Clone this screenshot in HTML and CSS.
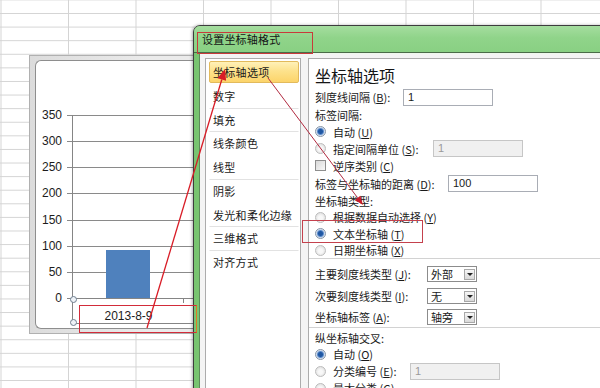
FILE: index.html
```html
<!DOCTYPE html>
<html lang="zh-CN">
<head>
<meta charset="utf-8">
<title>设置坐标轴格式</title>
<link rel="stylesheet" href="styles.css">
</head>
<body>
<div class="sheet">
  <div class="chart">
    <div class="chart-inner">
      <div class="plot-row">
        <div class="ylabels">
          <span>350</span><span>300</span><span>250</span><span>200</span><span>150</span><span>100</span><span>50</span><span>0</span>
        </div>
        <div class="plot">
          <div class="plot-area">
            <div class="bar" style="height:48px"></div>
          </div>
        </div>
      </div>
      <div class="xaxis">
        <span class="xlabel">2013-8-9</span>
        <i class="xtick"></i>
      </div>
    </div>
  </div>

  <div class="dialog">
    <div class="titlebar">设置坐标轴格式</div>
    <div class="dialog-body">
      <ul class="nav">
        <li class="item active">坐标轴选项</li>
        <li class="item sep">数字</li>
        <li class="item sep">填充</li>
        <li class="item">线条颜色</li>
        <li class="item sep">线型</li>
        <li class="item">阴影</li>
        <li class="item sep">发光和柔化边缘</li>
        <li class="item sep">三维格式</li>
        <li class="item">对齐方式</li>
      </ul>
      <div class="panel">
        <div class="section">
          <div class="heading">坐标轴选项</div>
          <div class="row r20"><span class="lbl w88">刻度线间隔 (<u>B</u>):</span><span class="field">1</span></div>
          <div class="row r16">标签间隔:</div>
          <div class="row"><span class="radio on"></span>自动 (<u>U</u>)</div>
          <div class="row"><span class="radio"></span><span class="lbl w100">指定间隔单位 (<u>S</u>):</span><span class="field off">1</span></div>
          <div class="row"><span class="check"></span>逆序类别 (<u>C</u>)</div>
          <div class="row r19"><span class="lbl w133">标签与坐标轴的距离 (<u>D</u>):</span><span class="field">100</span></div>
          <div class="row r16">坐标轴类型:</div>
          <div class="row r16"><span class="radio"></span>根据数据自动选择 (<u>Y</u>)</div>
          <div class="row"><span class="radio on"></span>文本坐标轴 (<u>T</u>)</div>
          <div class="row r16"><span class="radio"></span>日期坐标轴 (<u>X</u>)</div>
        </div>
        <div class="section s2">
          <div class="row r22"><span class="lbl w112">主要刻度线类型 (<u>J</u>):</span><span class="select"><span class="val">外部</span><span class="btn"></span></span></div>
          <div class="row r22"><span class="lbl w112">次要刻度线类型 (<u>I</u>):</span><span class="select"><span class="val">无</span><span class="btn"></span></span></div>
          <div class="row r20"><span class="lbl w112">坐标轴标签 (<u>A</u>):</span><span class="select"><span class="val">轴旁</span><span class="btn"></span></span></div>
        </div>
        <div class="section s3">
          <div class="row r16">纵坐标轴交叉:</div>
          <div class="row r16"><span class="radio on"></span>自动 (<u>O</u>)</div>
          <div class="row r18"><span class="radio"></span><span class="lbl w77">分类编号 (<u>E</u>):</span><span class="field off">1</span></div>
          <div class="row r16"><span class="radio"></span>最大分类 (<u>G</u>)</div>
        </div>
      </div>
    </div>
  </div>

  <div class="mark mark-title"></div>
  <div class="mark mark-text"></div>
  <div class="mark mark-date"></div>

  <svg class="arrows" width="600" height="388" viewBox="0 0 600 388">
    <line x1="147" y1="328" x2="221.8" y2="79.5" stroke="#d81c26" stroke-width="1.3"/>
    <polygon points="225,69 226.1,80.8 217.5,78.2" fill="#d81c26"/>
    <line x1="268" y1="78" x2="357.6" y2="197.8" stroke="#b22a40" stroke-width="1"/>
    <polygon points="363,205 360.4,195.7 354.8,199.9" fill="#c81c2c"/>
  </svg>
</div>
</body>
</html>
```

FILE: styles.css
```css
* { box-sizing: border-box; }

html, body {
  margin: 0;
  padding: 0;
}

body {
  width: 600px;
  height: 388px;
  overflow: hidden;
  background: #fff;
  font-family: "Noto Sans CJK SC", "Liberation Sans", sans-serif;
  color: #1a1a1a;
}

.sheet {
  position: relative;
  width: 600px;
  height: 388px;
  overflow: hidden;
  background-color: #fff;
  background-image:
    linear-gradient(to right, #d4d4d4 1px, transparent 1px),
    linear-gradient(to bottom, #d4d4d4 1px, transparent 1px);
  background-size: 67.5px 13.6px;
  background-position: 0.5px 13px;
}

/* ---------- chart ---------- */
.chart {
  position: absolute;
  left: 29px;
  top: 55px;
  width: 200px;
  height: 279px;
  border: 1px solid #b0b0b0;
  background: linear-gradient(to right, #dcdcdc, #ebebeb 60%);
  padding: 4px 0 4px 5px;
}

.chart-inner {
  height: 100%;
  background: #fff;
  border: 1px solid #8e8e8e;
  border-right: none;
  border-radius: 6px 0 0 6px;
  padding-top: 54px;
}

.plot-row {
  display: flex;
  align-items: flex-start;
}

.ylabels {
  width: 26px;
  height: 197px;
  margin: -7px 5px -7px 0;
  display: flex;
  flex-direction: column;
  justify-content: space-between;
  align-items: flex-end;
  font-family: "Liberation Sans", sans-serif;
  font-size: 12px;
  line-height: 14px;
  color: #1c1c1c;
}

.plot {
  width: 140px;
  height: 184px;
  border-bottom: 1px solid #858585;
  background-image: repeating-linear-gradient(to bottom, #8a8a8a 0 1px, transparent 1px 26.14px);
}

.plot-area {
  margin-left: 5px;
  height: 100%;
  border-left: 1px solid #858585;
  display: flex;
  align-items: flex-end;
}

.bar {
  margin-left: 33px;
  width: 44px;
  background: #4f81bd;
}

.xaxis {
  position: relative;
  margin-left: 36px;
  width: 150px;
  height: 25px;
  border-left: 1px solid #858585;
  border-bottom: 1px solid #858585;
}

.xaxis::before,
.xaxis::after {
  content: "";
  position: absolute;
  left: -3px;
  width: 5px;
  height: 5px;
  border-radius: 50%;
  border: 1px solid #6f7f90;
  background: #eef2f7;
}
.xaxis::before { top: -3px; }
.xaxis::after { bottom: -3px; }

.xlabel {
  display: block;
  width: 111px;
  padding-top: 10px;
  text-align: center;
  font-family: "Liberation Sans", sans-serif;
  font-size: 12px;
  line-height: 14px;
  color: #1c1c1c;
}

.xtick {
  position: absolute;
  left: 110px;
  top: 0;
  width: 1px;
  height: 4px;
  background: #858585;
}

/* ---------- dialog ---------- */
.dialog {
  position: absolute;
  left: 193px;
  top: 25px;
  width: 420px;
  height: 380px;
  border: 1px solid #3d3d3d;
  border-radius: 7px 0 0 0;
  background: linear-gradient(to right, #78c470, #8fd488 60%, #84cd7d);
  overflow: hidden;
  box-shadow: -1px 0 3px rgba(0, 0, 0, 0.3);
}

.titlebar {
  height: 27px;
  padding-left: 8px;
  font-size: 11px;
  letter-spacing: 0.2px;
  line-height: 26px;
  color: #141414;
  background: linear-gradient(to bottom, #a5dd9f, #90d48a 45%, #89d083);
  border-bottom: 1px solid #4b6b49;
}

.dialog-body {
  display: flex;
  align-items: flex-start;
  height: 100%;
  margin-left: 5px;
  border-top: 1px solid #eef8ec;
  border-left: 1px solid #5e8a5b;
  background: #f4f4f4;
  padding: 4px 0 0 5px;
}

.nav {
  list-style: none;
  margin: 0;
  width: 96px;
  height: 340px;
  padding: 2px 1px 0 3px;
  background: #fff;
  border: 1px solid #acacac;
}

.item {
  height: 23.75px;
  padding-left: 3px;
  border: 1px solid transparent;
  font-size: 11px;
  letter-spacing: 0.3px;
  line-height: 21px;
  color: #1a1a1a;
}

.item.sep {
  border-bottom-color: #e2e2e2;
}

.item.active {
  height: 22px;
  margin-bottom: 1.75px;
  border-color: #e2ba5c;
  border-radius: 2px;
  background: linear-gradient(to bottom, #fff1b8, #fde28c 45%, #fcd46a);
}

.panel {
  flex: 1;
  height: 340px;
  margin-left: 7px;
  background: #fff;
  border: 1px solid #acacac;
  padding: 4px 0 0 6px;
  font-size: 11px;
  color: #1a1a1a;
}

.heading {
  height: 24px;
  font-size: 16px;
  line-height: 24px;
  color: #161616;
}

.section + .section {
  margin-left: -6px;
  padding-left: 6px;
  border-top: 1px solid #d2d2d2;
}
.s2 { padding-top: 4px; }
.s3 { padding-top: 2px; }

.row {
  display: flex;
  align-items: center;
  height: 17px;
  line-height: 14px;
  white-space: nowrap;
}
.r16 { height: 16px; }
.r18 { height: 18px; }
.r19 { height: 19px; }
.r20 { height: 20px; }
.r22 { height: 22px; }

u { text-decoration: underline; text-underline-offset: 1px; }

.lbl { display: inline-block; flex: none; }
.w77 { width: 77px; }
.w88 { width: 88px; }
.w100 { width: 100px; }
.w112 { width: 112px; }
.w133 { width: 133px; }

.radio {
  flex: none;
  width: 11px;
  height: 11px;
  margin-right: 7px;
  border-radius: 50%;
  border: 1px solid #bcbcbc;
  background: radial-gradient(circle at 50% 55%, #f8f8f8 0 2px, #e2e2e2 5px);
}
.radio.on {
  border-color: #8594a6;
  background: radial-gradient(circle, #1f57a3 0 2px, #5d8ccb 3px, #cfdcee 4px, #eef2f8 5px);
}

.check {
  flex: none;
  width: 11px;
  height: 11px;
  margin-right: 7px;
  border: 1px solid #8e8e8e;
  background: linear-gradient(135deg, #d8d8d8, #f9f9f9);
}

.field {
  flex: none;
  width: 90px;
  height: 17px;
  padding-left: 4px;
  border: 1px solid #a9adb5;
  background: #fff;
  font-family: "Liberation Sans", sans-serif;
  font-size: 11px;
  line-height: 15px;
  color: #1a1a1a;
}
.field.off {
  background: #f0f0f0;
  border-color: #c6c6c6;
  color: #9a9a9a;
}

.select {
  flex: none;
  display: flex;
  align-items: center;
  width: 50px;
  height: 16px;
  padding-left: 3px;
  border: 1px solid #8c8c8c;
  background: #fff;
}
.select .val { flex: 1; }
.select .btn {
  width: 11px;
  height: 11px;
  margin-right: 1px;
  border: 1px solid #a8a8a8;
  background: linear-gradient(to bottom, #f6f6f6, #d9d9d9);
  display: flex;
  align-items: center;
  justify-content: center;
}
.select .btn::after {
  content: "";
  border-left: 3px solid transparent;
  border-right: 3px solid transparent;
  border-top: 3px solid #222;
}

/* ---------- annotations ---------- */
.mark {
  position: absolute;
  border: 1.5px solid #cc3340;
}
.mark-title {
  left: 197px;
  top: 32px;
  width: 116px;
  height: 22px;
  border-color: #c83a3a;
}
.mark-text {
  left: 302px;
  top: 220px;
  width: 121px;
  height: 23px;
  border-color: #c4414d;
}
.mark-date {
  left: 79px;
  top: 305px;
  width: 118px;
  height: 28px;
  border-color: #d22c3a;
  border-right-color: #e07a24;
}

.arrows {
  position: absolute;
  left: 0;
  top: 0;
  pointer-events: none;
}
```
